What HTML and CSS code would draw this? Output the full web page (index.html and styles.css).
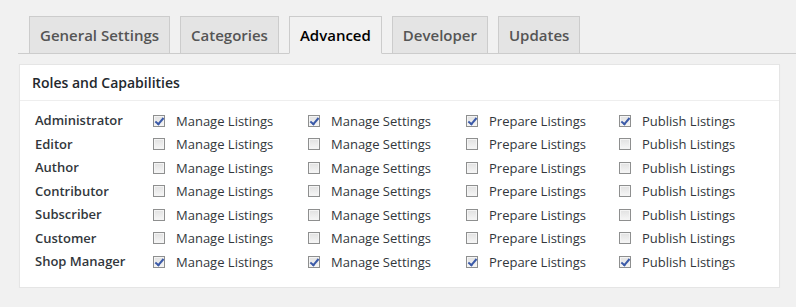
FILE: index.html
```html
<!DOCTYPE html>
<html>
<head>
<meta charset="utf-8">
<link rel="stylesheet" href="styles.css">
</head>
<body>
<div class="wrap">
  <nav class="tabs">
    <span class="tab">General Settings</span>
    <span class="tab">Categories</span>
    <span class="tab active">Advanced</span>
    <span class="tab">Developer</span>
    <span class="tab">Updates</span>
  </nav>
  <section class="card">
    <h2 class="card-title">Roles and Capabilities</h2>
    <div class="grid">
      <div class="role">Administrator</div>
      <label class="cap"><span class="box checked"></span>Manage Listings</label>
      <label class="cap"><span class="box checked"></span>Manage Settings</label>
      <label class="cap"><span class="box checked"></span>Prepare Listings</label>
      <label class="cap"><span class="box checked"></span>Publish Listings</label>

      <div class="role">Editor</div>
      <label class="cap"><span class="box"></span>Manage Listings</label>
      <label class="cap"><span class="box"></span>Manage Settings</label>
      <label class="cap"><span class="box"></span>Prepare Listings</label>
      <label class="cap"><span class="box"></span>Publish Listings</label>

      <div class="role">Author</div>
      <label class="cap"><span class="box"></span>Manage Listings</label>
      <label class="cap"><span class="box"></span>Manage Settings</label>
      <label class="cap"><span class="box"></span>Prepare Listings</label>
      <label class="cap"><span class="box"></span>Publish Listings</label>

      <div class="role">Contributor</div>
      <label class="cap"><span class="box"></span>Manage Listings</label>
      <label class="cap"><span class="box"></span>Manage Settings</label>
      <label class="cap"><span class="box"></span>Prepare Listings</label>
      <label class="cap"><span class="box"></span>Publish Listings</label>

      <div class="role">Subscriber</div>
      <label class="cap"><span class="box"></span>Manage Listings</label>
      <label class="cap"><span class="box"></span>Manage Settings</label>
      <label class="cap"><span class="box"></span>Prepare Listings</label>
      <label class="cap"><span class="box"></span>Publish Listings</label>

      <div class="role">Customer</div>
      <label class="cap"><span class="box"></span>Manage Listings</label>
      <label class="cap"><span class="box"></span>Manage Settings</label>
      <label class="cap"><span class="box"></span>Prepare Listings</label>
      <label class="cap"><span class="box"></span>Publish Listings</label>

      <div class="role">Shop Manager</div>
      <label class="cap"><span class="box checked"></span>Manage Listings</label>
      <label class="cap"><span class="box checked"></span>Manage Settings</label>
      <label class="cap"><span class="box checked"></span>Prepare Listings</label>
      <label class="cap"><span class="box checked"></span>Publish Listings</label>
    </div>
  </section>
</div>
</body>
</html>
```
FILE: styles.css
```css
html, body {
  margin: 0;
  padding: 0;
  background: #f1f1f1;
  font-family: "Open Sans", "Liberation Sans", sans-serif;
  color: #32373c;
}

.wrap {
  padding-left: 18px;
}

.tabs {
  display: flex;
  gap: 10px;
  padding: 16px 0 0 11px;
  border-bottom: 1px solid #ccc;
  height: 37px;
}

.tab {
  box-sizing: border-box;
  height: 38px;
  padding: 0 10px;
  line-height: 36px;
  font-size: 15px;
  font-weight: 600;
  color: #555;
  background: #e4e4e4;
  border: 1px solid #ccc;
  margin-bottom: -1px;
}

.tab.active {
  background: #f1f1f1;
  color: #000;
  border-bottom-color: #f1f1f1;
}

.card {
  margin: 10px 0 0 1px;
  width: 761px;
  box-sizing: border-box;
  background: #fff;
  border: 1px solid #e5e5e5;
  box-shadow: 0 1px 1px rgba(0, 0, 0, 0.04);
}

.card-title {
  margin: 0;
  padding: 8px 12px;
  font-size: 14px;
  line-height: 19px;
  font-weight: 600;
  color: #23282d;
  border-bottom: 1px solid #eee;
}

.grid {
  display: grid;
  grid-template-columns: 118px 155px 158px 153px auto;
  grid-auto-rows: 23.5px;
  padding: 8px 0 13px 15px;
  font-size: 13px;
}

.role {
  font-weight: 600;
  color: #32373c;
  display: flex;
  align-items: center;
  margin-top: -1px;
}

.cap {
  display: flex;
  align-items: center;
  color: #32373c;
}

.box {
  box-sizing: border-box;
  width: 12px;
  height: 12px;
  margin-right: 11px;
  border: 1px solid #8e8f8f;
  background: linear-gradient(#e1e1e1, #f6f6f6);
  box-shadow: inset 0 0 0 1px #f4f4f4;
  position: relative;
}

.box.checked::after {
  content: "";
  position: absolute;
  left: 3px;
  top: 0px;
  width: 3px;
  height: 7px;
  border: solid #3b5aa8;
  border-width: 0 2px 2px 0;
  transform: rotate(40deg);
}
```
